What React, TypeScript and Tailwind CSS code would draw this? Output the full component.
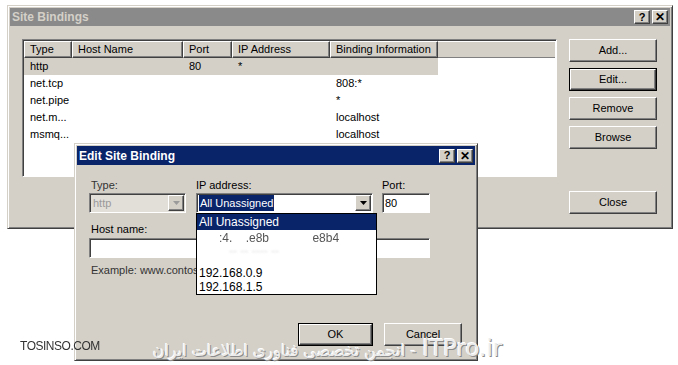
import React from 'react'

const raised =
	'border border-t-white border-l-white border-r-[#404040] border-b-[#404040] shadow-[inset_-1px_-1px_0_#808080]'
const sunken =
	'border border-t-[#808080] border-l-[#808080] border-r-white border-b-white shadow-[inset_1px_1px_0_#404040]'
const frame =
	'border border-t-[#d4d0c8] border-l-[#d4d0c8] border-r-[#404040] border-b-[#404040] shadow-[inset_1px_1px_0_#ffffff,inset_-1px_-1px_0_#808080]'

const columns = [
	{ label: 'Type', w: 'w-[48px]' },
	{ label: 'Host Name', w: 'w-[111px]' },
	{ label: 'Port', w: 'w-[49px]' },
	{ label: 'IP Address', w: 'w-[98px]' },
	{ label: 'Binding Information', w: 'w-[108px]' },
]

const bindings = [
	['http', '', '80', '*', ''],
	['net.tcp', '', '', '', '808:*'],
	['net.pipe', '', '', '', '*'],
	['net.m...', '', '', '', 'localhost'],
	['msmq...', '', '', '', 'localhost'],
]

function TitleButtons() {
	return (
		<div className="flex items-center gap-[2px]">
			<div className={`${raised} flex h-[14px] w-[16px] items-center justify-center bg-[#d4d0c8] text-[11px] font-bold leading-none text-black`}>
				?
			</div>
			<div className={`${raised} flex h-[14px] w-[16px] items-center justify-center bg-[#d4d0c8] text-[12px] font-bold leading-none text-black`}>
				✕
			</div>
		</div>
	)
}

function Button({ label, isDefault, w = 'w-[88px]' }: { label: string; isDefault?: boolean; w?: string }) {
	return (
		<div className={`${w} h-[23px] ${isDefault ? 'border border-black' : ''}`}>
			<div className={`${raised} flex h-full w-full items-center justify-center bg-[#d4d0c8] text-[11px] text-black`}>
				{label}
			</div>
		</div>
	)
}

function Arrow({ disabled }: { disabled?: boolean }) {
	return (
		<div className={`${raised} flex h-[16px] w-[16px] shrink-0 items-center justify-center bg-[#d4d0c8]`}>
			<svg width="7" height="4" viewBox="0 0 7 4">
				<path d="M0 0h7L3.5 4z" fill={disabled ? '#9a9a9a' : '#000'} />
			</svg>
		</div>
	)
}

export default function App() {
	return (
		<div className="relative h-[365px] w-[678px] overflow-hidden bg-white font-['Liberation_Sans',Arial,sans-serif] text-[11px] text-black">
			{/* Site Bindings window */}
			<div className={`absolute left-[7px] top-[5px] flex h-[224px] w-[666px] flex-col bg-[#d4d0c8] p-[2px] ${frame}`}>
				<div className="flex h-[18px] items-center justify-between bg-[#8a8a8a] pl-[2px] pr-[2px]">
					<span className="text-[12px] font-bold text-[#d4d0c8]">Site Bindings</span>
					<TitleButtons />
				</div>
				<div className="flex pl-[12px] pt-[13px]">
					<div className={`${sunken} h-[138px] w-[535px] bg-white p-[1px]`}>
						<div className="flex h-[17px]">
							{columns.map((c) => (
								<div key={c.label} className={`${raised} ${c.w} flex items-center bg-[#d4d0c8] pl-[5px]`}>
									{c.label}
								</div>
							))}
							<div className="flex-1 border-t border-t-white border-b border-b-[#808080] bg-[#d4d0c8]" />
						</div>
						{bindings.map((row, i) => (
							<div key={i} className="flex h-[17px] items-center">
								{row.map((cell, j) => (
									<div
										key={j}
										className={`${columns[j].w} flex h-full items-center pl-[6px] ${i === 0 ? 'bg-[#d4d0c8]' : ''}`}
									>
										{cell}
									</div>
								))}
							</div>
						))}
					</div>
					<div className="ml-[12px] flex flex-col gap-[6px]">
						<Button label="Add..." />
						<Button label="Edit..." isDefault />
						<Button label="Remove" />
						<Button label="Browse" />
						<div className="mt-[36px]">
							<Button label="Close" />
						</div>
					</div>
				</div>
			</div>

			{/* Edit Site Binding dialog */}
			<div className={`absolute left-[74px] top-[143px] flex h-[218px] w-[404px] flex-col bg-[#d4d0c8] p-[2px] ${frame}`}>
				<div className="flex h-[19px] shrink-0 items-center justify-between bg-[#0a246a] pl-[2px] pr-[2px]">
					<span className="text-[12px] font-bold text-white">Edit Site Binding</span>
					<TitleButtons />
				</div>
				<div className="flex flex-1 flex-col pl-[12px] pt-[14px]">
					<div className="flex">
						<div className="flex w-[97px] flex-col gap-[2px]">
							<span className="pl-[2px] leading-[12px] text-[#333]">Type:</span>
							<div className={`${sunken} flex h-[20px] items-center justify-between bg-[#e2dfd9] pl-[3px] pr-[1px]`}>
								<span className="text-[#9a9a9a]">http</span>
								<Arrow disabled />
							</div>
						</div>
						<div className="ml-[10px] flex w-[177px] flex-col gap-[2px]">
							<span className="leading-[12px]">IP address:</span>
							<div className={`${sunken} flex h-[20px] items-center justify-between bg-white pl-[2px] pr-[1px]`}>
								<span className="bg-[#0a246a] px-[1px] text-white">All Unassigned</span>
								<Arrow />
							</div>
						</div>
						<div className="ml-[9px] flex w-[48px] flex-col gap-[2px]">
							<span className="leading-[12px]">Port:</span>
							<div className={`${sunken} flex h-[20px] items-center bg-white pl-[2px]`}>80</div>
						</div>
					</div>
					<span className="mt-[10px] pl-[2px] leading-[12px]">Host name:</span>
					<div className={`${sunken} mt-[3px] h-[20px] w-[341px] bg-white`} />
					<span className="mt-[6px] whitespace-nowrap pl-[2px] leading-[12px] text-[#333]">Example: www.contos</span>
					<div className="mt-auto flex justify-end gap-[11px] pb-[12px] pr-[13px]">
						<Button label="OK" isDefault w="w-[75px]" />
						<Button label="Cancel" w="w-[78px]" />
					</div>
				</div>

				{/* open drop-down list */}
				<div className="absolute left-[121px] top-[69px] flex h-[82px] w-[181px] flex-col border border-black bg-white text-[12px]">
					<div className="flex h-[16px] items-center bg-[#0a246a] pl-[2px] text-white">All Unassigned</div>
					<div className="flex h-[15px] items-center pl-[2px] text-[#555] blur-[0.6px]">
						{'\u00a0\u00a0\u00a0\u00a0\u00a0\u00a0:4.\u00a0\u00a0\u00a0\u00a0.e8b\u00a0\u00a0\u00a0\u00a0\u00a0\u00a0\u00a0\u00a0\u00a0\u00a0\u00a0\u00a0\u00a0e8b4'}
					</div>
					<div className="flex h-[12px] items-center pl-[2px] text-[#ddd] blur-[1px]">
						{'\u00a0\u00a0\u00a0\u00a0\u00a0\u00a0\u00a0\u00a0 -- -- ---- --'}
					</div>
					<div className="h-[10px]" />
					<div className="flex h-[14px] items-center pl-[2px]">192.168.0.9</div>
					<div className="flex h-[14px] items-center pl-[2px]">192.168.1.5</div>
				</div>
			</div>

			{/* watermark */}
			<div className="absolute left-[20px] top-[336px] origin-left text-[13px] tracking-[-0.5px] text-[#333] [transform:scaleX(0.92)]">
				TOSINSO.COM
			</div>
			<div
				dir="ltr"
				className="absolute left-[153px] top-[331px] flex items-baseline gap-[6px] font-['DejaVu_Sans',sans-serif] text-[#ececec] [text-shadow:1px_1px_0_#8a8a8a,-1px_-1px_0_#ffffff]"
			>
				<span className="text-[16px]">انجمن تخصصی فناوری اطلاعات ایران -</span>
				<span className="text-[23px]">ITPro.ir</span>
			</div>
		</div>
	)
}
